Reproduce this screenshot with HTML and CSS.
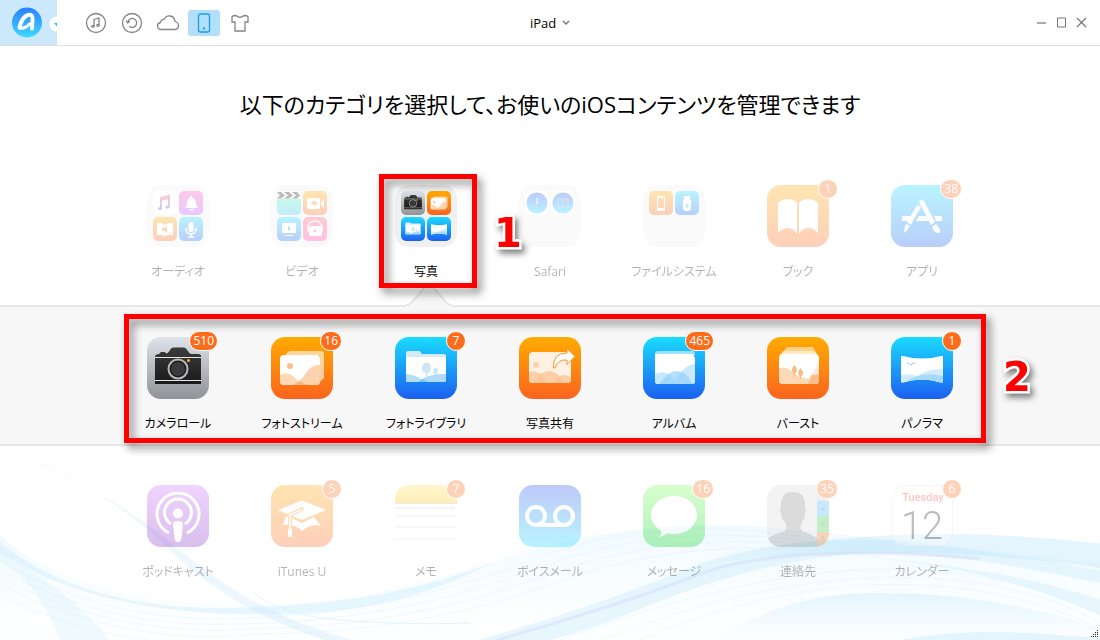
FILE: index.html
```html
<!DOCTYPE html>
<html lang="ja">
<head>
<meta charset="utf-8">
<meta name="viewport" content="width=device-width, initial-scale=1">
<title>iPad</title>
<link rel="stylesheet" href="styles.css">
</head>
<body>
<svg class="defs" width="0" height="0" aria-hidden="true">
  <defs>
    <linearGradient id="orange" x2="0" y2="1"><stop offset="0" stop-color="#ffab00"/><stop offset="1" stop-color="#fb641f"/></linearGradient>
    <linearGradient id="blue" x2="0" y2="1"><stop offset="0" stop-color="#1adcff"/><stop offset="1" stop-color="#1c5ff0"/></linearGradient>
    <linearGradient id="silver" x2="0" y2="1"><stop offset="0" stop-color="#dfe4eb"/><stop offset="1" stop-color="#8f9296"/></linearGradient>
    <linearGradient id="purple" x2="0" y2="1"><stop offset="0" stop-color="#d070ff"/><stop offset="1" stop-color="#8430c4"/></linearGradient>
    <linearGradient id="violet" x2="0" y2="1"><stop offset="0" stop-color="#ff50b8"/><stop offset="1" stop-color="#b050ff"/></linearGradient>
    <linearGradient id="pink" x2="0" y2="1"><stop offset="0" stop-color="#ff5068"/><stop offset="1" stop-color="#ff38a8"/></linearGradient>
    <linearGradient id="mint" x2="0" y2="1"><stop offset="0" stop-color="#48ecb8"/><stop offset="1" stop-color="#38c0ff"/></linearGradient>
    <linearGradient id="voice" x2="0" y2="1"><stop offset="0" stop-color="#2c50f0"/><stop offset="1" stop-color="#18dcff"/></linearGradient>
    <linearGradient id="green" x2="0" y2="1"><stop offset="0" stop-color="#80ff60"/><stop offset="1" stop-color="#08d420"/></linearGradient>
    <linearGradient id="yellow" x2="0" y2="1"><stop offset="0" stop-color="#ffe460"/><stop offset="1" stop-color="#ffc814"/></linearGradient>
    <linearGradient id="note" x2="0" y2="1"><stop offset="0" stop-color="#ff3868"/><stop offset="1" stop-color="#4060ff"/></linearGradient>
    <linearGradient id="logo" x2="0" y2="1"><stop offset="0" stop-color="#2a80ff"/><stop offset="1" stop-color="#40d8ff"/></linearGradient>
    <linearGradient id="wave" x2="0" y2="1"><stop offset="0" stop-color="#b4e4fa" stop-opacity=".34"/><stop offset="1" stop-color="#d8f2fd" stop-opacity=".06"/></linearGradient>
    <linearGradient id="ribbon"><stop offset="0" stop-color="#b4e2fa" stop-opacity="0"/><stop offset=".4" stop-color="#b4e2fa"/><stop offset="1" stop-color="#b4e2fa"/></linearGradient>
    <linearGradient id="body" x2="0" y2="1"><stop offset="0" stop-color="#3c3c3c"/><stop offset="1" stop-color="#191919"/></linearGradient>
    <clipPath id="tile-clip"><rect width="62" height="62" rx="14"/></clipPath>
    <clipPath id="stream-clip"><rect x="9" y="18" width="40" height="30" rx="4"/></clipPath>
    <clipPath id="library-clip"><rect x="11" y="17" width="40" height="28" rx="2"/></clipPath>
    <clipPath id="share-clip"><rect x="10" y="15" width="42" height="31" rx="4"/></clipPath>
    <clipPath id="album-clip"><rect x="12" y="14" width="40" height="33" rx="3"/></clipPath>
    <clipPath id="burst-clip"><rect x="12" y="17" width="40" height="30" rx="4"/></clipPath>
    <clipPath id="pano-clip"><path d="M10 20q0-1.500 2-1q19 5 38 0q2-.5 2 1v24q0 2-2 1.500q-19-6-38 0q-2 .5-2-1.500z"/></clipPath>
    <g id="camera">
      <path d="M8 47V19q1-2 4-2l2-2h4l1 1.500q2 0 3-2l2-3q1-1 3-1h9q2 0 3 1l3 4q1 1.500 3 1.500h6q3 0 3 2v28z" fill="url(#body)"/>
      <path d="M8 20.500h46M8 43.500h46" stroke="#e6e6e6"/>
      <circle cx="31" cy="32" r="9.500" fill="#1c1c1c" stroke="#b7babd" stroke-width="2"/>
      <circle cx="31" cy="32" r="7" fill="#3a3a3a"/>
      <circle cx="41.500" cy="23.500" r="1.500" fill="#f2b51c"/>
    </g>
    <g id="stream">
      <path d="M13 19l4-4q1-1 3-1h30q3 0 3 4v23l-4 4V19z" fill="#fff" opacity=".6"/>
      <g clip-path="url(#stream-clip)"><path d="M9 18h40v30H9z" fill="#fff"/><circle cx="19" cy="29" r="3" fill="#fbbf8c"/>
      <path d="M9 38q7-4 13 1q5 5 11 9H9z" fill="#fdd9b8"/><path d="M22 48q8-4 13-12q6-9 14-8v20z" fill="#fcd3ae"/><path d="M22 48l7-4 7 4z" fill="#fbb982"/></g>
    </g>
    <g id="library">
      <path d="M11 16q0-2 2-2h11q2 0 2 2l1 1h22q2 0 2 2v3H11z" fill="#d6ebf5"/>
      <g clip-path="url(#library-clip)"><path d="M11 20h40v25H11z" fill="#fff"/><path d="M31.500 31v9M40.500 33v6" stroke="#bfdfee"/><ellipse cx="31.500" cy="31" rx="4.500" ry="5.500" fill="#cde8f4"/><ellipse cx="40.500" cy="34" rx="2.500" ry="3" fill="#cde8f4"/>
      <path d="M11 37q9 0 19 8H11z" fill="#b6ddf8"/><path d="M23 45q10-9 28-8v8z" fill="#b0dbfa"/><path d="M23 45l5-3 5 3z" fill="#7cc6f6"/></g>
    </g>
    <g id="pano"><g clip-path="url(#pano-clip)"><path d="M10 18h42v30H10z" fill="#fff"/><path d="M10 38q10-2 16 1q12-8 26-7v16H10z" fill="#d2ecfd"/><path d="M16 44q16-10 36-5v9H16z" fill="#a6dafa"/><path d="M18 45q10-5 22 0" fill="#7ec9f7"/><path d="M16 26q3 0 4 2q2-3 4-2" fill="none" stroke="#91c9ec"/></g></g>
  </defs>
</svg>

<div class="app">
  <header class="topbar">
    <nav class="tools" aria-label="メイン">
      <button class="brand" aria-label="メニュー">
        <svg width="57" height="45" viewBox="0 0 57 45"><circle cx="27" cy="22.500" r="15" fill="url(#logo)"/><path d="M19.500 27.500Q22 17 28 15Q33 14 32.500 19L32 28.500" fill="none" stroke="#fff" stroke-width="4" stroke-linecap="round" stroke-linejoin="round"/><path d="M19.500 28q5 1.500 10-4" fill="none" stroke="#fff" stroke-width="3" stroke-linecap="round"/><circle cx="57" cy="24" r="7.500" fill="#fff"/><path d="M54 23h6l-3 3.500z" fill="#38b4ee"/></svg>
      </button>
      <div class="tool-list">
        <button class="tool" aria-label="ミュージック"><svg class="line-icon" width="22" height="22" viewBox="0 0 22 22"><circle cx="11" cy="11" r="9.500"/><path d="M9 14V7.500l5-1.500v7"/><ellipse cx="8" cy="14.300" rx="1.300" ry="1"/><ellipse cx="13" cy="13.300" rx="1.300" ry="1"/></svg></button>
        <button class="tool" aria-label="バックアップ"><svg class="line-icon" width="22" height="22" viewBox="0 0 22 22"><circle cx="11" cy="11" r="9.500"/><path d="M6.700 10.500a4.500 4.500 0 1 1 1.500 3.800M5 8.700l1.700 2.100 2.200-1.600"/></svg></button>
        <button class="tool" aria-label="iCloud"><svg class="line-icon" width="24" height="22" viewBox="0 0 24 22"><path d="M5 17.500q-3.500-.5-3.500-3.500q0-3 3-3.500q.5-3.500 3.500-3q2-4 6-3.500q4.500.5 5 5.500q3.500 1 3.500 4q0 3.500-3.500 4z"/></svg></button>
        <button class="tool tool-active" aria-label="デバイス" aria-pressed="true"><svg class="line-icon" width="22" height="22" viewBox="0 0 22 22"><rect x="5.500" y="2" width="11" height="18" rx="2"/><circle cx="11" cy="16.500" r=".5"/></svg></button>
        <button class="tool" aria-label="スキン"><svg class="line-icon" width="22" height="22" viewBox="0 0 22 22"><path d="M7 3.500q4 3.500 8 0q3 0 4 1v5.500h-3v9H6v-9H3V4.500q1-1 4-1z"/></svg></button>
      </div>
    </nav>
    <div class="device">
      <select class="device-select" aria-label="デバイス"><option>iPad</option></select>
      <svg class="device-chevron" width="8" height="6" viewBox="0 0 8 6"><path d="M1 1l3 3 3-3" fill="none" stroke="#777" stroke-width="1.500"/></svg>
    </div>
    <div class="window-controls">
      <button class="window-button" aria-label="最小化"><svg width="11" height="11" viewBox="0 0 11 11"><path d="M1 6h9" stroke="#aaa" stroke-width="2"/></svg></button>
      <button class="window-button" aria-label="最大化"><svg width="11" height="11" viewBox="0 0 11 11"><path d="M1.500 1h8v9h-8z" fill="none" stroke="#777"/></svg></button>
      <button class="window-button" aria-label="閉じる"><svg width="11" height="11" viewBox="0 0 11 11"><path d="M1 1l9 9M10 1l-9 9" stroke="#777" stroke-width="1.200"/></svg></button>
    </div>
  </header>

  <main class="content">
    <h1 class="title">以下のカテゴリを選択して、お使いのiOSコンテンツを管理できます</h1>

    <section class="grid grid-first">
      <button class="tile faded">
        <span class="art"><svg class="icon" viewBox="0 0 62 62"><rect width="62" height="62" rx="14" fill="#f0f0f0"/>
          <rect x="6" y="6" width="24" height="24" rx="5" fill="#fff"/><rect x="32" y="6" width="24" height="24" rx="5" fill="url(#violet)"/><rect x="6" y="32" width="24" height="24" rx="5" fill="url(#orange)"/><rect x="32" y="32" width="24" height="24" rx="5" fill="url(#blue)"/>
          <path d="M14 23V13l8-2v11M14 15l8-2" fill="none" stroke="url(#note)" stroke-width="1.800"/><ellipse cx="13" cy="23.500" rx="2" ry="1.600" fill="#4060ff"/><ellipse cx="20.500" cy="22" rx="2" ry="1.600" fill="#6058ff"/>
          <path d="M44 11q1.500 0 1.500 1.500q3.500 1.500 3.500 6q0 3 2 4.500H38q2-1.500 2-4.500q0-4.500 3-6Q43 11 44 11zM42 24h5l-2.500 2z" fill="#fff"/>
          <path d="M10 38q5-1 8 2q3-3 8-2v12q-5-1-8 1.500q-3-2.500-8-1.500z" fill="#fff"/><path d="M15 43h2l3-2v7l-3-2h-2z" fill="#ff8b12"/>
          <rect x="41.500" y="37" width="5" height="10" rx="2.500" fill="#fff"/><path d="M39 43q0 6 5 6t5-6M44 49v3M41 52h6" fill="none" stroke="#fff" stroke-width="1.500"/></svg></span>
        <span class="label">オーディオ</span>
      </button>
      <button class="tile faded">
        <span class="art"><svg class="icon" viewBox="0 0 62 62"><rect width="62" height="62" rx="14" fill="#f0f0f0"/>
          <path d="M6 14h24v11q0 5-5 5H11q-5 0-5-5z" fill="url(#mint)"/><path d="M6 7h4l4 3.500-4 3H6l3-3zM13 7h5l4 3.500-4 3h-5l4-3zM21 7h5l3 3.500-3 3h-5l4-3z" fill="#252525"/>
          <rect x="32" y="6" width="24" height="24" rx="5" fill="url(#orange)"/><rect x="6" y="32" width="24" height="24" rx="5" fill="url(#blue)"/><rect x="32" y="32" width="24" height="24" rx="5" fill="url(#pink)"/>
          <rect x="36" y="13" width="13" height="11" rx="2" fill="#fff"/><path d="M50 17l3-3v9l-3-3z" fill="#fff"/><path d="M40 18q1-3 4-2t2 4h-3l-3-1z" fill="#ff912d"/>
          <path d="M11 38h14v10H11zM15 50h6l2 1H13z" fill="#fff"/><path d="M17 41l3 2.500-3 2.500z" fill="#248af4"/>
          <path d="M37 47v-4q0-7 7-7t7 7v4" fill="none" stroke="#fff" stroke-opacity=".8" stroke-width="1.500"/><rect x="38" y="41" width="13" height="10" rx="2" fill="#fff"/><path d="M43 44l3 2-3 2z" fill="#ff3868"/></svg></span>
        <span class="label">ビデオ</span>
      </button>
      <div class="selected">
        <svg class="caret" width="46" height="24" viewBox="0 0 46 24"><path d="M0 24v-2q3 0 5-2L20 3q3-3 6 0l15 17q2 2 5 2v2z" fill="#f6f6f6"/><path d="M0 22q3 0 5-2L20 3q3-3 6 0l15 17q2 2 5 2" fill="none" stroke="#e3e3e3" stroke-width="1.500"/></svg>
        <button class="tile" aria-pressed="true">
          <span class="art"><svg class="icon" viewBox="0 0 62 62"><rect width="62" height="62" rx="14" fill="#f0f0f0"/>
            <rect x="6" y="6" width="24" height="24" rx="5" fill="url(#silver)"/><rect x="32" y="6" width="24" height="24" rx="5" fill="url(#orange)"/><rect x="6" y="32" width="24" height="24" rx="5" fill="url(#blue)"/><rect x="32" y="32" width="24" height="24" rx="5" fill="url(#blue)"/>
            <use href="#camera" transform="translate(6 6) scale(.387)"/><use href="#stream" transform="translate(32 6) scale(.387)"/><use href="#library" transform="translate(6 32) scale(.387)"/><use href="#pano" transform="translate(32 32) scale(.387)"/></svg></span>
          <span class="label">写真</span>
        </button>
        <span class="frame frame-category"></span>
        <strong class="step step-one">1</strong>
      </div>
      <button class="tile faded">
        <span class="art"><svg class="icon" viewBox="0 0 62 62"><rect width="62" height="62" rx="14" fill="#f0f0f0"/>
          <rect x="6" y="6" width="24" height="24" rx="5" fill="#fff"/><rect x="32" y="6" width="24" height="24" rx="5" fill="#fff"/><circle cx="18" cy="18" r="10.500" fill="url(#voice)"/><circle cx="44" cy="18" r="10.500" fill="url(#voice)"/><path d="M18 13v6" stroke="#fff"/><path d="M18 19l3 2" stroke="#ff4040"/><path d="M39 14q3-1 5 1q3-2 5-1v8q-3-1-5 1q-2-2-5-1zM44 15v7" fill="none" stroke="#80b8ff"/><path d="M47 13h2v4h-2z" fill="#ff5060"/></svg></span>
        <span class="label">Safari</span>
      </button>
      <button class="tile faded">
        <span class="art"><svg class="icon" viewBox="0 0 62 62"><rect width="62" height="62" rx="14" fill="#f0f0f0"/>
          <rect x="6" y="6" width="24" height="24" rx="5" fill="url(#orange)"/><rect x="32" y="6" width="24" height="24" rx="5" fill="url(#blue)"/>
          <path fill-rule="evenodd" d="M15 11h6q1 0 1 1v13q0 1-1 1h-6q-1 0-1-1V12q0-1 1-1zM15 13v10h6V13z" fill="#fff"/><path d="M41 11h6v4H41zM40 15h8v8q0 3-4 3t-4-3z" fill="#fff"/><path d="M44 18v5M42 20l2 2 2-2" fill="none" stroke="#2aa1f4"/></svg></span>
        <span class="label">ファイルシステム</span>
      </button>
      <button class="tile faded">
        <span class="art"><svg class="icon" viewBox="0 0 62 62"><rect width="62" height="62" rx="14" fill="url(#orange)"/><path d="M11 18q4-4 10-4 6 0 9 4v31q-3-6-9-6-6 0-10 5zM32 18q3-4 9-4 6 0 10 4v30q-4-5-10-5-6 0-9 6z" fill="#fff"/></svg><span class="badge">1</span></span>
        <span class="label">ブック</span>
      </button>
      <button class="tile faded">
        <span class="art"><svg class="icon" viewBox="0 0 62 62"><rect width="62" height="62" rx="14" fill="url(#blue)"/><path d="M11 31h10l-3 5h-7zM28 31h7l3 5H25zM43 31h8v5h-6z" fill="#fff"/><path d="M26 20l4 2-10 17.500-4-2z" fill="#fff"/><path d="M15 39l4 2-5 7q-2-2 1-9z" fill="#fff"/><path d="M28 17q2-4 5-1l11 21-4 3z" fill="#fff"/><path d="M41 41.500l4-2.500 4 5v4q-4 0-6-2z" fill="#fff"/></svg><span class="badge">38</span></span>
        <span class="label">アプリ</span>
      </button>
    </section>

    <section class="band">
      <div class="grid grid-band">
        <button class="tile"><span class="art"><svg class="icon" viewBox="0 0 62 62"><rect width="62" height="62" rx="14" fill="url(#silver)"/><use href="#camera"/></svg><span class="badge">510</span></span><span class="label">カメラロール</span></button>
        <button class="tile"><span class="art"><svg class="icon" viewBox="0 0 62 62"><rect width="62" height="62" rx="14" fill="url(#orange)"/><use href="#stream"/></svg><span class="badge">16</span></span><span class="label">フォトストリーム</span></button>
        <button class="tile"><span class="art"><svg class="icon" viewBox="0 0 62 62"><rect width="62" height="62" rx="14" fill="url(#blue)"/><use href="#library"/></svg><span class="badge">7</span></span><span class="label">フォトライブラリ</span></button>
        <button class="tile"><span class="art"><svg class="icon" viewBox="0 0 62 62"><rect width="62" height="62" rx="14" fill="url(#orange)"/><g clip-path="url(#share-clip)"><path d="M10 15h42v31H10z" fill="#fff2e5"/><circle cx="17" cy="28" r="3" fill="#fcd0aa"/><path d="M10 35q6-2 12 2l6 9H10zM33 46q6-8 12-8q5 0 7 3v5z" fill="#fcd0aa"/><path d="M15 46q6-12 15-12 9 0 15 12z" fill="#fbc294" opacity=".75"/></g><path d="M34.500 31q-1-15 13.500-15v-4.500l8 8-8 8V23q-9-1-12 8z" fill="#fff" stroke="#fb9420"/></svg></span><span class="label">写真共有</span></button>
        <button class="tile"><span class="art"><svg class="icon" viewBox="0 0 62 62"><rect width="62" height="62" rx="14" fill="url(#blue)"/><g clip-path="url(#album-clip)"><path d="M12 14h40v4H12z" fill="#9de2ff"/><path d="M12 17h38l2 4v26H12z" fill="#fff"/><path d="M12 37q8-4 15 1l8 9H12z" fill="#c5e8fd"/><path d="M30 47q11-20 22-20v20z" fill="#cbe9fd"/><path d="M16 47q9-13 18-13t16 13z" fill="#93d2fb" opacity=".7"/></g></svg><span class="badge">465</span></span><span class="label">アルバム</span></button>
        <button class="tile"><span class="art"><svg class="icon" viewBox="0 0 62 62"><rect width="62" height="62" rx="14" fill="url(#orange)"/><path d="M15 17l4-6q0-1 2-1h24q2 0 2 2l3 5z" fill="#ffd385"/><path d="M13 18l3-4h31l4 5z" fill="#fff" opacity=".55"/><g clip-path="url(#burst-clip)"><path d="M12 17h40v30H12z" fill="#fff"/><path d="M52 25v22H40z" fill="#fde8d5"/><path d="M12 31q8-2 16 6 9 6 17 4 5-2 7-2v8H12z" fill="#fdd9b8"/><path d="M44 38q4 0 8-1v10H41z" fill="#fbbf8c"/></g><path d="M27.500 28q5 6 0 9-5-3 0-9zM33.500 31q5 6 0 9-5-3 0-9z" fill="#fbb982"/><path d="M27.500 35v5M33.500 38v4" stroke="#fbb982"/></svg></span><span class="label">バースト</span></button>
        <button class="tile"><span class="art"><svg class="icon" viewBox="0 0 62 62"><rect width="62" height="62" rx="14" fill="url(#blue)"/><use href="#pano"/></svg><span class="badge">1</span></span><span class="label">パノラマ</span></button>
        <span class="frame frame-items"></span>
        <strong class="step step-two">2</strong>
      </div>
    </section>

    <section class="lower">
      <svg class="waves" viewBox="0 0 1100 195" preserveAspectRatio="none" aria-hidden="true">
        <path d="M0 90Q75 158 250 160Q380 157 520 107Q650 70 780 83Q880 92 1100 118V195H0z" fill="url(#wave)" opacity=".55"/>
        <path d="M0 97Q90 170 250 162Q390 158 490 118Q390 172 260 169Q100 170 0 108z" fill="#bde7fb" opacity=".35"/>
        <path d="M15 6Q120 52 180 105Q260 172 352 195H325Q230 165 165 100Q105 42 15 6z" fill="#c4e7fb" opacity=".32"/>
        <path d="M0 108Q70 145 110 195H60Q40 140 0 115z" fill="#cfeffd" opacity=".3"/>
        <path d="M478 195Q600 160 700 118Q800 88 900 96Q1000 106 1100 125V138Q960 106 860 108Q760 115 650 160Q590 185 550 195z" fill="#b8e4fa" opacity=".3"/>
        <path d="M700 112Q900 74 1100 98V123Q920 94 700 118z" fill="url(#ribbon)" opacity=".35"/>
        <path d="M497 195Q620 160 710 125Q800 98 980 113" fill="none" stroke="#c5c7fa" stroke-width="3" opacity=".28"/>
        <path d="M250 145Q280 170 340 175T470 178" fill="none" stroke="#c8e6fb" opacity=".5"/>
        <path d="M880 113Q1000 122 1100 154V170Q1000 125 880 113z" fill="#bce7fb" opacity=".3"/>
        <path d="M716 195Q790 144 890 148Q990 148 1100 183V195z" fill="url(#wave)"/>
        <path d="M900 195Q960 184 1030 188L1100 193v2z" fill="#ccecfc" opacity=".5"/>
        <g fill="none" stroke="#c5e9fa" opacity=".25"><path d="M0 116Q100 175 230 174Q390 170 530 115T850 100"/><path d="M0 124Q110 185 240 179Q400 176 540 122T860 104"/><path d="M0 132Q120 194 250 184Q410 182 550 129T870 108"/><path d="M0 140Q130 204 260 189Q420 188 560 136T880 112"/><path d="M0 150Q130 214 270 195"/><path d="M560 195Q750 125 880 124T1100 170"/><path d="M600 195Q760 133 890 132T1100 178"/><path d="M640 195Q770 140 890 139T1100 184"/></g>
      </svg>
      <div class="grid grid-last">
        <button class="tile faded"><span class="art"><svg class="icon" viewBox="0 0 62 62"><rect width="62" height="62" rx="14" fill="url(#purple)"/><path d="M22 48a21 21 0 1 1 18 0M24 39a13.500 13.500 0 1 1 14 0" fill="none" stroke="#fff" stroke-width="3"/><circle cx="31" cy="28.500" r="5" fill="#fff"/><path d="M26 39q0-3 5-3t5 3l-1.500 14q-.5 4-3.500 4t-3.500-4z" fill="#fff"/></svg></span><span class="label">ポッドキャスト</span></button>
        <button class="tile faded"><span class="art"><svg class="icon" viewBox="0 0 62 62"><rect width="62" height="62" rx="14" fill="url(#orange)"/><path d="M7 25l24-9.500L55 25 31 35z" fill="#fff"/><path d="M15 31l3 1v8q-3-1-6 0zM20 33l11 5 12-6 7 9q-10-3-19 5-5-5-11-6z" fill="#fff"/><path d="M31 24l-12 6v13" fill="none" stroke="#ff9128" stroke-width="4"/><path d="M31 24l-12 6v14" fill="none" stroke="#fff" stroke-width="1.500"/><circle cx="31" cy="24" r="2" fill="#ffab38"/><rect x="17" y="43" width="4" height="9" rx="1.500" fill="#fff"/></svg><span class="badge">5</span></span><span class="label">iTunes U</span></button>
        <button class="tile faded"><span class="art"><svg class="icon" viewBox="0 0 62 62"><g clip-path="url(#tile-clip)"><path d="M0 0h62v62H0z" fill="#fff"/></g><path d="M0 18V14Q1 1 14 0h34q13 1 14 14v4z" fill="url(#yellow)"/><path d="M0 18.500h62" stroke="#bbb"/><path d="M1 23h60" stroke="#bbb" stroke-width="2" stroke-dasharray="1 1.500"/><path d="M0 31h61M0 42h61M0 54h61" stroke="#e4e4e4" stroke-width="1.500"/></svg><span class="badge">7</span></span><span class="label">メモ</span></button>
        <button class="tile faded"><span class="art"><svg class="icon" viewBox="0 0 62 62"><rect width="62" height="62" rx="14" fill="url(#voice)"/><path d="M17 40h28" stroke="#fff" stroke-width="4"/><circle cx="17" cy="31" r="9" fill="none" stroke="#fff" stroke-width="4"/><circle cx="45" cy="31" r="9" fill="none" stroke="#fff" stroke-width="4"/></svg></span><span class="label">ボイスメール</span></button>
        <button class="tile faded"><span class="art"><svg class="icon" viewBox="0 0 62 62"><rect width="62" height="62" rx="14" fill="url(#green)"/><ellipse cx="31" cy="30" rx="23" ry="19" fill="#fff"/><path d="M19 44q0 5-3 8 6-1 9-5z" fill="#fff"/></svg><span class="badge">16</span></span><span class="label">メッセージ</span></button>
        <button class="tile faded"><span class="art"><svg class="icon" viewBox="0 0 62 62"><g clip-path="url(#tile-clip)"><path d="M0 0h50v62H0z" fill="#dadada"/><path d="M50 0h12v16H50z" fill="#c8c8c8"/><path d="M50 16h12v15H50z" fill="#48b8ff"/><path d="M50 31h12v16H50z" fill="#38c850"/><path d="M50 47h12v15H50z" fill="#ff8020"/><path d="M0 62v-8q8-5 18-8 3-3 0-9-4-3-4-9-2-3 0-6-1-15 12-15t12 15q2 3 0 6 0 6-3 9-3 6 0 9 9 3 15 7v9z" fill="#8c8c8c"/></g><g fill="#555" opacity=".5"><circle cx="56" cy="24" r="2"/><circle cx="56" cy="39" r="2"/><circle cx="56" cy="53" r="2"/></g></svg><span class="badge">35</span></span><span class="label">連絡先</span></button>
        <button class="tile faded"><span class="art"><svg class="icon" viewBox="0 0 62 62"><rect x=".5" y=".5" width="61" height="61" rx="14" fill="#fff" stroke="#e2e2e2"/><text class="calendar-day" x="32" y="16" text-anchor="middle">Tuesday</text><text class="calendar-date" x="31" y="54" text-anchor="middle">12</text></svg><span class="badge">6</span></span><span class="label">カレンダー</span></button>
      </div>
      <svg class="grip" width="9" height="9" viewBox="0 0 9 9" aria-hidden="true"><path d="M7 0h1v1H7zM5 2h1v1H5zM7 2h1v1H7zM3 4h1v1H3zM5 4h1v1H5zM7 4h1v1H7zM1 6h1v1H1zM3 6h1v1H3zM5 6h1v1H5zM7 6h1v1H7z" fill="#222"/></svg>
    </section>
  </main>
</div>
</body>
</html>
```
FILE: styles.css
```css
* { box-sizing: border-box; }

body {
  margin: 0;
  background: #fff;
  color: #000;
  font-family: "Open Sans", "Noto Sans CJK JP", sans-serif;
  font-size: 12px;
  font-feature-settings: "palt";
}

button {
  margin: 0;
  padding: 0;
  border: 0;
  background: none;
  color: inherit;
  font: inherit;
  cursor: pointer;
}

svg { display: block; }
.defs { position: absolute; }

.app {
  display: flex;
  flex-direction: column;
  min-height: 100vh;
}

.topbar {
  display: grid;
  grid-template-columns: 1fr auto 1fr;
  align-items: center;
  border-bottom: 1px solid #e0e0e0;
}

.tools {
  display: flex;
  align-items: center;
  gap: 23px;
}
.brand { background: #cce9fc; }
.tool-list { display: flex; gap: 4px; }
.tool {
  display: grid;
  place-items: center;
  width: 32px;
  height: 26px;
  border-radius: 3px;
  color: #858585;
}
.tool-active { background: #b2dffa; color: #189cf0; }
.line-icon { fill: none; stroke: currentColor; stroke-width: 1.3; }

.device { display: grid; align-items: center; }
.device-select {
  grid-area: 1 / 1;
  width: 40px;
  padding: 0;
  border: 0;
  appearance: none;
  background: none;
  color: #000;
  font: inherit;
  font-size: 13px;
}
.device-chevron { grid-area: 1 / 1; justify-self: end; pointer-events: none; }

.window-controls {
  display: flex;
  justify-content: flex-end;
  padding-right: 9px;
}
.window-button {
  display: grid;
  place-items: center;
  width: 20px;
  height: 20px;
}

.content {
  display: flex;
  flex: 1;
  flex-direction: column;
}

.title {
  margin: 0;
  padding: 42px 0 65px;
  font-size: 22px;
  font-weight: 400;
  line-height: 32px;
  text-align: center;
}

.grid {
  position: relative;
  display: grid;
  grid-template-columns: repeat(7, 1fr);
  width: 100%;
  max-width: 868px;
  margin: 0 auto;
}
.grid-first { z-index: 1; padding-bottom: 24px; }
.grid-band { padding: 30px 0 11px; }
.grid-last { padding: 39px 0 58px; }

.tile {
  display: flex;
  flex-direction: column;
  align-items: center;
  gap: 16px;
  width: 100%;
}
.faded { opacity: 0.3; }
.art { position: relative; }
.icon { width: 62px; height: 62px; }
.label { line-height: 18px; white-space: nowrap; }

.badge {
  position: absolute;
  top: -6px;
  right: -9px;
  min-width: 20px;
  height: 20px;
  padding: 0 3px;
  border: 1px solid #fff;
  border-radius: 10px;
  background: #fd6c1b;
  color: #fff;
  line-height: 18px;
  text-align: center;
}

.calendar-day { fill: #ff3b30; font: 500 11px Roboto, sans-serif; }
.calendar-date { fill: #222; font: 300 38px Roboto, sans-serif; }

.band {
  border: solid #e7e7e7;
  border-width: 2px 0;
  background: #f7f7f7;
}

.selected { position: relative; }
.selected .tile { position: relative; }
.caret {
  position: absolute;
  left: 42px;
  bottom: -26px;
}

.frame {
  position: absolute;
  border: 5px solid #f00;
  filter: drop-shadow(4px 5px 4px rgba(0, 0, 0, 0.5));
  pointer-events: none;
}
.frame-category { top: -11px; bottom: -7px; left: 15px; width: 98px; }
.frame-items { top: 7px; right: -2px; bottom: 1px; left: 8px; }

.step {
  position: absolute;
  color: #f00;
  font-family: "DejaVu Sans", sans-serif;
  font-size: 40px;
  font-weight: 700;
  line-height: 40px;
  -webkit-text-stroke: 5px #fff;
  paint-order: stroke fill;
  filter: drop-shadow(3px 4px 3px rgba(0, 0, 0, 0.5));
}
.step-one { top: 28px; left: 130px; }
.step-two { top: 50px; left: 887px; }

.lower { position: relative; flex: 1; }
.waves {
  position: absolute;
  inset: 0;
  width: 100%;
  height: 100%;
}
.grip { position: absolute; right: 1px; bottom: 1px; }
```
